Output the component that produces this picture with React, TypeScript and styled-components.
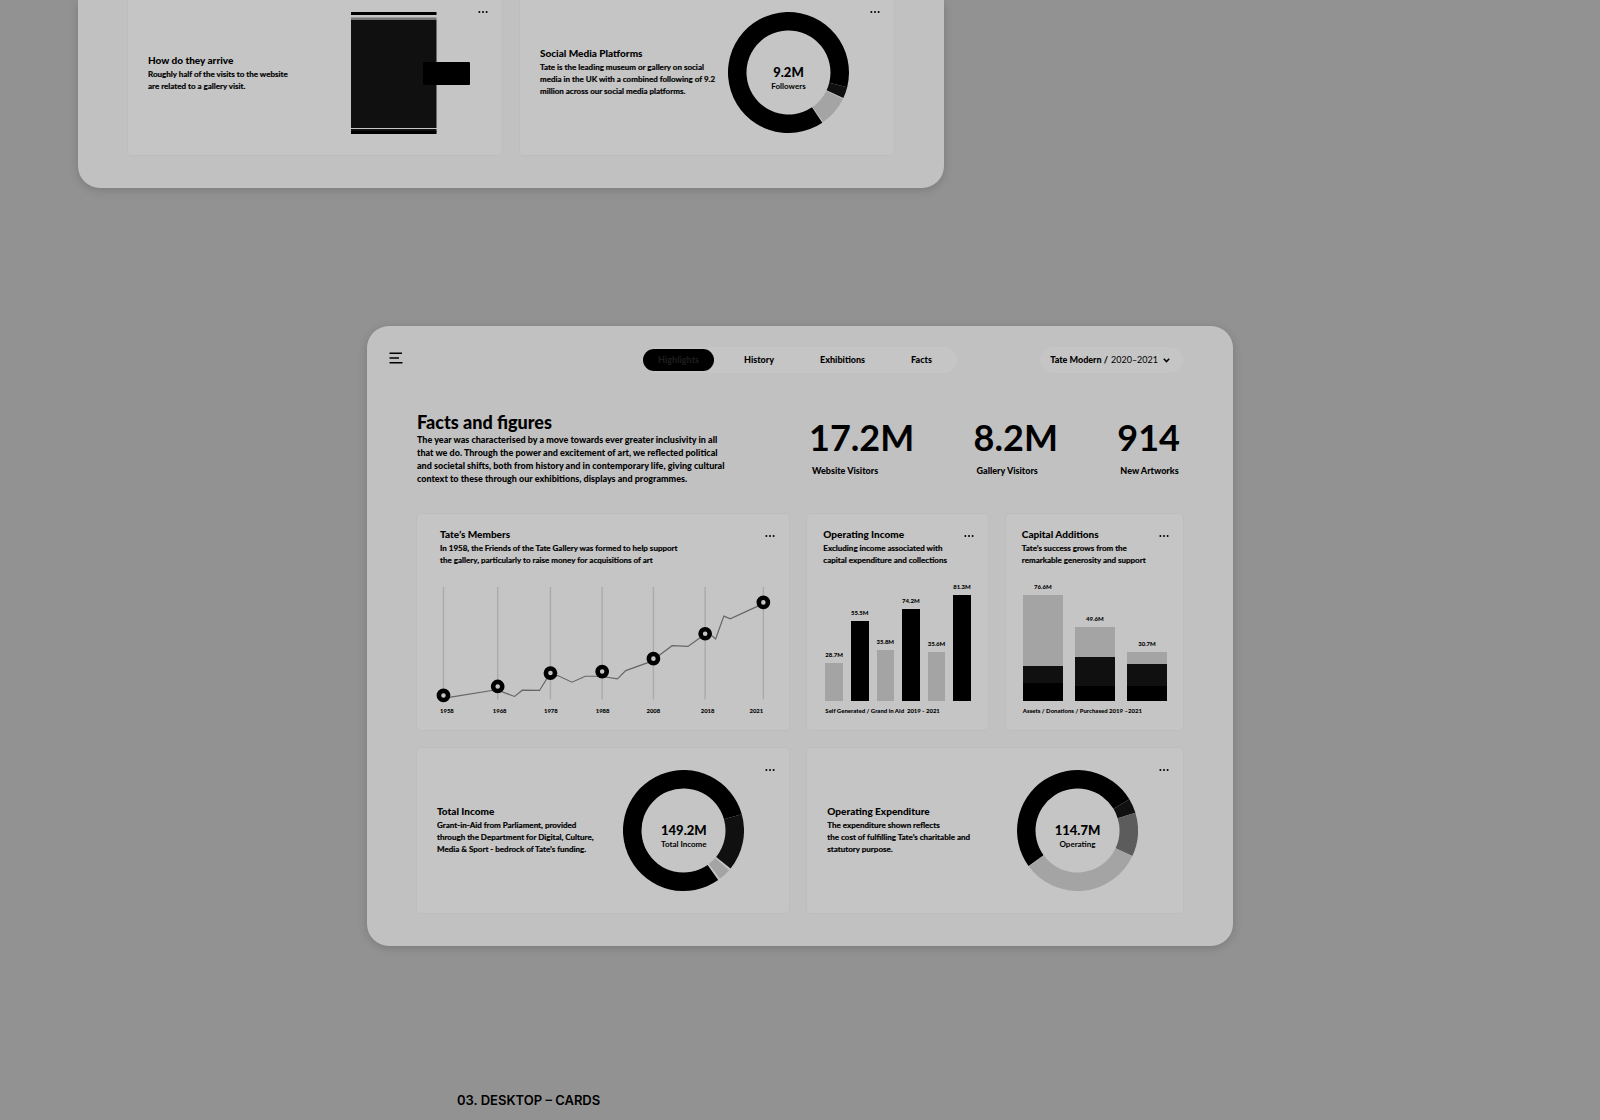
import React from "react";
import styled, { createGlobalStyle } from "styled-components";

const ink = "#000";
const coal = "#101010";
const mid = "#5c5c5c";
const pale = "#a4a4a4";
const panel = "#c1c1c1";
const raised = "#c5c5c5";

const GlobalStyle = createGlobalStyle`
  *, *::before, *::after { box-sizing: border-box; }
  body {
    margin: 0;
    background: #929292;
    color: ${ink};
    font-family: Lato, "Liberation Sans", sans-serif;
  }
  h1, h2, p, dl, dd, figure { margin: 0; }
  button, select { font: inherit; color: inherit; border: 0; background: none; padding: 0; }
`;

const Board = styled.main`
  min-height: 100vh;
  display: flex;
  flex-direction: column;
  padding: 0 78px;
  overflow: hidden;
`;

const Screen = styled.section<{ $cut?: boolean }>`
  width: 100%;
  max-width: 866px;
  display: flex;
  flex-direction: column;
  align-self: ${(p) => (p.$cut ? "flex-start" : "center")};
  justify-content: flex-end;
  height: ${(p) => (p.$cut ? "188px" : "auto")};
  margin-bottom: 138px;
  padding-bottom: 33px;
  border-radius: ${(p) => (p.$cut ? "0 0 22px 22px" : "22px")};
  background: ${panel};
  box-shadow: 0 2px 10px rgba(0, 0, 0, 0.16);
`;

const Header = styled.header`
  display: grid;
  grid-template-columns: 1fr auto 1fr;
  align-items: center;
  padding: 21px 22px 0;
`;

const MenuButton = styled.button`
  align-self: start;
  justify-self: start;
  display: flex;
  align-items: center;
  height: 22px;
`;

const Nav = styled.nav`
  display: flex;
  padding: 2px 2px 2px 0;
  border-radius: 13px;
  background: ${raised};
`;

const NavLink = styled.a<{ $active?: boolean }>`
  padding: 0 ${(p) => (p.$active ? "15px" : "23px")};
  margin-right: ${(p) => (p.$active ? "7px" : "0")};
  border-radius: 11px;
  background: ${(p) => (p.$active ? ink : "transparent")};
  color: ${(p) => (p.$active ? "#1c1c1c" : ink)};
  font-size: 9px;
  font-weight: 900;
  line-height: 22px;
  text-decoration: none;
`;

const Period = styled.div`
  justify-self: end;
  display: flex;
  align-items: center;
  gap: 3px;
  height: 26px;
  margin-right: 28px;
  padding: 0 13px 0 10px;
  border-radius: 13px;
  background: ${raised};
  font-size: 9px;
  line-height: 22px;
`;

const PeriodLabel = styled.label`
  font-weight: 900;
`;

const PeriodSelect = styled.select`
  appearance: none;
  height: 22px;
  margin-right: 2px;
`;

const Columns = styled.div<{ $top?: number }>`
  display: grid;
  grid-template-columns: repeat(4, 1fr);
  gap: 18px;
  padding: 0 50px;
  margin-top: ${(p) => p.$top ?? 0}px;
`;

const Intro = styled.div`
  grid-column: span 2;
`;

const Heading = styled.h1`
  font-size: 18px;
  font-weight: 900;
  line-height: 22px;
`;

const Lead = styled.p`
  font-size: 9px;
  font-weight: 900;
  line-height: 13px;
  white-space: nowrap;
`;

const Stats = styled.dl`
  grid-column: span 2;
  display: flex;
  justify-content: space-between;
  padding-right: 3px;
`;

const Stat = styled.div`
  display: flex;
  flex-direction: column-reverse;
  justify-content: flex-end;
`;

const StatValue = styled.dd`
  font-size: 36px;
  font-weight: 700;
  line-height: 53px;
`;

const StatLabel = styled.dt`
  padding-left: 3px;
  font-size: 9px;
  font-weight: 900;
  line-height: 14px;
`;

const CardBase = styled.article<{ $wide?: boolean }>`
  position: relative;
  grid-column: span ${(p) => (p.$wide ? 2 : 1)};
  border-radius: 4px;
  background: ${raised};
  box-shadow: 0 0 0 1px #bdbdbd;
`;

const ChartCard = styled(CardBase)`
  height: 216px;
  display: flex;
  flex-direction: column;
  justify-content: space-between;
  padding: 13px ${(p) => (p.$wide ? "18px" : "16px")} 12px;
`;

const SplitCard = styled(CardBase)`
  height: 165px;
  display: flex;
  align-items: center;
  justify-content: space-between;
  padding: 0 45px 0 20px;
`;

const More = styled.button`
  position: absolute;
  top: 17px;
  right: 14px;
  display: flex;
  height: 9px;
  align-items: center;
`;

const Copy = styled.div<{ $indent?: boolean }>`
  padding-left: ${(p) => (p.$indent ? "5px" : "0")};
  white-space: nowrap;
`;

const SplitCopy = styled(Copy)`
  padding-bottom: 3px;
`;

const Title = styled.h2`
  font-size: 10px;
  font-weight: 900;
  line-height: 15px;
`;

const Text = styled.p`
  font-size: 8px;
  font-weight: 700;
  line-height: 12px;
  -webkit-text-stroke: 0.2px ${ink};
`;

const LineSvg = styled.svg`
  display: block;
  width: 100%;
  font-size: 6px;
  font-weight: 900;
`;

const Figure = styled.figure<{ $inset?: boolean }>`
  padding: 0 ${(p) => (p.$inset ? "1px 0 2px" : "0 0 1px")};
`;

const Bars = styled.div<{ $gap: number }>`
  display: flex;
  align-items: flex-end;
  gap: ${(p) => p.$gap}px;
`;

const Column = styled.div`
  flex: 1 1 0;
  min-width: 0;
  display: flex;
  flex-direction: column;
  align-items: center;
`;

const Value = styled.span`
  margin-bottom: 4px;
  font-size: 6px;
  font-weight: 900;
  line-height: 8px;
`;

const Bar = styled.div<{ $tone: string }>`
  width: 100%;
  background: ${(p) => p.$tone};
`;

const Caption = styled.figcaption`
  margin: 5px 0 2px;
  font-size: 6px;
  font-weight: 900;
  line-height: 10px;
  white-space: nowrap;
`;

const Ring = styled.div`
  display: grid;
  place-items: center;
  flex: none;
  width: 121px;
  height: 121px;
  > * { grid-area: 1 / 1; }
`;

const RingLabel = styled.div`
  padding-top: 10px;
  text-align: center;
  font-size: 8px;
  font-weight: 700;
  line-height: 10px;
`;

const RingValue = styled.strong`
  display: block;
  font-size: 13px;
  font-weight: 900;
  line-height: 17px;
`;

const FlowChart = styled.svg`
  flex: none;
  margin-right: -13px;
`;

const Section = styled.p`
  margin: 6px 0 6px 379px;
  font-family: Inter, "Liberation Sans", sans-serif;
  font-size: 13px;
  font-weight: 600;
  line-height: 20px;
`;

const Dots = () => (
  <More type="button" aria-label="More options">
    <svg width="10" height="4" viewBox="0 0 10 4">
      <circle cx="1.4" cy="2" r="1" />
      <circle cx="5" cy="2" r="1" />
      <circle cx="8.6" cy="2" r="1" />
    </svg>
  </More>
);

type Slice = { from: number; to: number; tone: string };

const polar = (angle: number, r: number) => {
  const a = ((angle - 90) * Math.PI) / 180;
  return `${(60.5 + r * Math.cos(a)).toFixed(2)} ${(60.5 + r * Math.sin(a)).toFixed(2)}`;
};

const slicePath = ({ from, to }: Slice) => {
  const large = to - from > 180 ? 1 : 0;
  return `M${polar(from, 60.5)} A60.5 60.5 0 ${large} 1 ${polar(to, 60.5)} L${polar(to, 42)} A42 42 0 ${large} 0 ${polar(from, 42)}Z`;
};

const Donut = ({ slices, value, label }: { slices: Slice[]; value: string; label: string }) => (
  <Ring>
    <svg width="121" height="121" viewBox="0 0 121 121" aria-hidden="true">
      {slices.map((s) => (
        <path key={s.from} d={slicePath(s)} fill={s.tone} />
      ))}
    </svg>
    <RingLabel>
      <RingValue>{value}</RingValue>
      {label}
    </RingLabel>
  </Ring>
);

const Lines = ({ rows }: { rows: string[] }) => (
  <>
    {rows.map((row, i) => (
      <React.Fragment key={row}>
        {i > 0 && <br />}
        {row}
      </React.Fragment>
    ))}
  </>
);

const DonutCard = (p: { title: string; rows: string[]; slices: Slice[]; value: string; label: string }) => (
  <SplitCard $wide>
    <SplitCopy>
      <Title>{p.title}</Title>
      <Text><Lines rows={p.rows} /></Text>
    </SplitCopy>
    <Donut slices={p.slices} value={p.value} label={p.label} />
    <Dots />
  </SplitCard>
);

const members = [
  { year: "1958", x: 8.5, y: 111, tx: 5 },
  { year: "1968", x: 63, y: 102, tx: 58 },
  { year: "1978", x: 116, y: 88.5, tx: 109.5 },
  { year: "1988", x: 168, y: 87, tx: 161.5 },
  { year: "2008", x: 219.5, y: 74, tx: 212.5 },
  { year: "2018", x: 271.5, y: 49, tx: 267 },
  { year: "2021", x: 330, y: 17.5, tx: 316 },
];

const income = [
  { value: "28.7M", height: 38, tone: pale },
  { value: "55.5M", height: 80, tone: ink },
  { value: "35.8M", height: 51, tone: pale },
  { value: "74.2M", height: 92, tone: ink },
  { value: "35.6M", height: 49, tone: pale },
  { value: "81.3M", height: 106, tone: ink },
];

const additions = [
  { value: "76.6M", parts: [71, 17, 18] },
  { value: "49.6M", parts: [30, 29, 15] },
  { value: "30.7M", parts: [12, 22, 15] },
];

const partTones = [pale, coal, ink];

const App = () => (
  <>
    <GlobalStyle />
    <Board>
      <Screen $cut aria-label="Visits">
        <Columns>
          <SplitCard $wide>
            <Copy>
              <Title>How do they arrive</Title>
              <Text><Lines rows={["Roughly half of the visits to the website", "are related to a gallery visit."]} /></Text>
            </Copy>
            <FlowChart width="119" height="122" viewBox="0 0 119 122" aria-hidden="true">
              <rect width="85.5" height="3" fill={ink} />
              <rect y="5.5" width="85.5" height="2.5" fill="#757575" />
              <rect y="8" width="85.5" height="108" fill={coal} />
              <rect y="117" width="85.5" height="3" fill={coal} />
              <rect y="119" width="85.5" height="3" fill={ink} />
              <rect x="72" y="50" width="47" height="23" rx="1" fill={ink} />
            </FlowChart>
            <Dots />
          </SplitCard>
          <DonutCard
            title="Social Media Platforms"
            rows={["Tate is the leading museum or gallery on social", "media in the UK with a combined following of 9.2", "million across our social media platforms."]}
            value="9.2M"
            label="Followers"
            slices={[
              { from: 146, to: 464, tone: ink },
              { from: 104, to: 115, tone: coal },
              { from: 116, to: 145, tone: pale },
            ]}
          />
        </Columns>
      </Screen>

      <Screen aria-label="Facts and figures">
        <Header>
          <MenuButton type="button" aria-label="Menu">
            <svg width="14" height="12" viewBox="0 0 14 12" stroke={ink} strokeWidth="1.5">
              <path d="M0.5 1.2H13M0.5 6H10M0.5 10.8H13.5" />
            </svg>
          </MenuButton>
          <Nav>
            <NavLink href="#highlights" $active>Highlights</NavLink>
            <NavLink href="#history">History</NavLink>
            <NavLink href="#exhibitions">Exhibitions</NavLink>
            <NavLink href="#facts">Facts</NavLink>
          </Nav>
          <Period>
            <PeriodLabel htmlFor="period">Tate Modern /</PeriodLabel>
            <PeriodSelect id="period">
              <option>2020–2021</option>
            </PeriodSelect>
            <svg width="7" height="5" viewBox="0 0 7 5" fill="none" stroke={ink} strokeWidth="1.6" aria-hidden="true">
              <path d="M0.8 0.8L3.5 3.5L6.2 0.8" />
            </svg>
          </Period>
        </Header>

        <Columns $top={38}>
          <Intro>
            <Heading>Facts and figures</Heading>
            <Lead>
              <Lines
                rows={[
                  "The year was characterised by a move towards ever greater inclusivity in all",
                  "that we do. Through the power and excitement of art, we reflected political",
                  "and societal shifts, both from history and in contemporary life, giving cultural",
                  "context to these through our exhibitions, displays and programmes.",
                ]}
              />
            </Lead>
          </Intro>
          <Stats>
            <Stat><StatLabel>Website Visitors</StatLabel><StatValue>17.2M</StatValue></Stat>
            <Stat><StatLabel>Gallery Visitors</StatLabel><StatValue>8.2M</StatValue></Stat>
            <Stat><StatLabel>New Artworks</StatLabel><StatValue>914</StatValue></Stat>
          </Stats>
        </Columns>

        <Columns $top={29}>
          <ChartCard $wide>
            <Copy $indent>
              <Title>Tate’s Members</Title>
              <Text><Lines rows={["In 1958, the Friends of the Tate Gallery was formed to help support", "the gallery, particularly to raise money for acquisitions of art"]} /></Text>
            </Copy>
            <LineSvg viewBox="0 0 338 134" role="img" aria-label="Members by year">
              {members.map((m) => (
                <path key={m.year} d={`M${m.x} 2V115`} stroke="#aaa" strokeWidth="1.4" />
              ))}
              <path
                d="M8.5 113.5L15.7 112.7L61.7 105.3L80 112L87.7 105.7L105 106L113.3 92.7L123.3 91L137.7 97.7L151 91.7H166.7L183.3 94.3L191.7 86L216.7 77L238.3 61L254.3 61.7L266.7 52.7L271 49L278.3 51L282 54.3L290.3 31.3L296.7 34L325 21"
                fill="none"
                stroke="#666"
                strokeWidth="1.2"
              />
              {members.map((m) => (
                <g key={m.year}>
                  <circle cx={m.x} cy={m.y} r="4.6" fill={raised} stroke={ink} strokeWidth="4.6" />
                  <text x={m.tx} y="129">{m.year}</text>
                </g>
              ))}
            </LineSvg>
            <Dots />
          </ChartCard>

          <ChartCard>
            <Copy>
              <Title>Operating Income</Title>
              <Text><Lines rows={["Excluding income associated with", "capital expenditure and collections"]} /></Text>
            </Copy>
            <Figure $inset>
              <Bars $gap={8}>
                {income.map((b) => (
                  <Column key={b.value}>
                    <Value>{b.value}</Value>
                    <Bar $tone={b.tone} style={{ height: b.height }} />
                  </Column>
                ))}
              </Bars>
              <Caption>Self Generated / Grand in Aid&nbsp; 2019 - 2021</Caption>
            </Figure>
            <Dots />
          </ChartCard>

          <ChartCard>
            <Copy>
              <Title>Capital Additions</Title>
              <Text><Lines rows={["Tate’s success grows from the", "remarkable generosity and support"]} /></Text>
            </Copy>
            <Figure>
              <Bars $gap={12}>
                {additions.map((b) => (
                  <Column key={b.value}>
                    <Value>{b.value}</Value>
                    {b.parts.map((h, i) => (
                      <Bar key={partTones[i]} $tone={partTones[i]} style={{ height: h }} />
                    ))}
                  </Column>
                ))}
              </Bars>
              <Caption>Assets / Donations / Purchased 2019 –2021</Caption>
            </Figure>
            <Dots />
          </ChartCard>

          <DonutCard
            title="Total Income"
            rows={["Grant-in-Aid from Parliament, provided", "through the Department for Digital, Culture,", "Media & Sport - bedrock of Tate’s funding."]}
            value="149.2M"
            label="Total Income"
            slices={[
              { from: 145, to: 434.5, tone: ink },
              { from: 74.5, to: 129, tone: coal },
              { from: 131, to: 143, tone: pale },
            ]}
          />
          <DonutCard
            title="Operating Expenditure"
            rows={["The expenditure shown reflects", "the cost of fulfilling Tate’s charitable and", "statutory purpose."]}
            value="114.7M"
            label="Operating"
            slices={[
              { from: 234, to: 419, tone: ink },
              { from: 59, to: 73, tone: coal },
              { from: 73, to: 115, tone: mid },
              { from: 115, to: 233.5, tone: pale },
            ]}
          />
        </Columns>
      </Screen>

      <Section>03. DESKTOP – CARDS</Section>
    </Board>
  </>
);

export default App;
